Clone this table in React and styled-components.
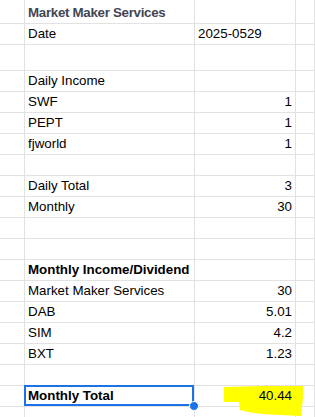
import React from 'react';
import styled, { createGlobalStyle } from 'styled-components';

const GlobalStyle = createGlobalStyle`
  html, body {
    margin: 0;
    padding: 0;
    background: #ffffff;
  }
  body {
    font-family: 'Liberation Sans', Arial, sans-serif;
  }
`;

const GRID = '#e2e2e2';
const BLUE = '#1a73e8';

const rows = [
  { label: 'Market Maker Services', kind: 'title', h: 24 },
  { label: 'Date', value: '2025-0529', valueLeft: true },
  { h: 26 },
  { label: 'Daily Income' },
  { label: 'SWF', value: '1' },
  { label: 'PEPT', value: '1' },
  { label: 'fjworld', value: '1' },
  {},
  { label: 'Daily Total', value: '3' },
  { label: 'Monthly', value: '30' },
  {},
  {},
  { label: 'Monthly Income/Dividend', kind: 'bold' },
  { label: 'Market Maker Services', value: '30' },
  { label: 'DAB', value: '5.01' },
  { label: 'SIM', value: '4.2' },
  { label: 'BXT', value: '1.23' },
  {},
  { label: 'Monthly Total', value: '40.44', kind: 'bold', selected: true },
  {},
];

const Sheet = styled.div`
  position: relative;
  width: 315px;
  height: 417px;
  overflow: hidden;
  background: #fff;
  font-size: 13.33px;
  color: #000;
`;

const Row = styled.div`
  display: grid;
  grid-template-columns: 25px 170px 101px 1fr;
  height: ${(p) => p.$h}px;
`;

const Cell = styled.div`
  position: relative;
  display: flex;
  align-items: flex-end;
  justify-content: ${(p) => (p.$right ? 'flex-end' : 'flex-start')};
  padding: 0 3px 2px 3px;
  line-height: 16px;
  white-space: nowrap;
  border-right: 1px solid ${GRID};
  border-bottom: 1px solid ${GRID};
  font-weight: ${(p) => (p.$bold ? 700 : 400)};
  color: ${(p) => (p.$muted ? '#3f4654' : '#000')};
  letter-spacing: ${(p) => (p.$muted ? '-0.3px' : 'normal')};
  overflow: visible;
  z-index: ${(p) => (p.$selected ? 3 : 'auto')};

  ${(p) =>
    p.$selected &&
    `
    &::after {
      content: '';
      position: absolute;
      top: -1px;
      left: -1px;
      right: 0;
      bottom: 0;
      border: 2px solid ${BLUE};
      pointer-events: none;
    }
  `}
`;

const CellText = styled.span`
  position: relative;
  z-index: 2;
`;

const FillHandle = styled.span`
  position: absolute;
  right: -5px;
  bottom: -5px;
  width: 8px;
  height: 8px;
  border-radius: 50%;
  background: ${BLUE};
  border: 1px solid #fff;
  z-index: 4;
`;

const Highlight = styled.svg`
  position: absolute;
  left: 0;
  top: 0;
  width: 315px;
  height: 417px;
  z-index: 1;
  pointer-events: none;
`;

function SheetRow({ label, value, kind, valueLeft, selected, h = 21 }) {
  return (
    <Row $h={h}>
      <Cell />
      <Cell $bold={kind === 'title' || kind === 'bold'} $muted={kind === 'title'} $selected={selected}>
        {label}
        {selected && <FillHandle />}
      </Cell>
      <Cell $right={!valueLeft}>
        {value && <CellText>{value}</CellText>}
      </Cell>
      <Cell />
    </Row>
  );
}

export default function App() {
  return (
    <>
      <GlobalStyle />
      <Sheet>
        {rows.map((r, i) => (
          <SheetRow key={i} {...r} />
        ))}
        <Highlight viewBox="0 0 315 417">
          <path
            d="M224 387 L262 386 L303 386 L303 398 L302 407 L301 416 L280 415 L262 414 L248 412 L240 410 L239 402 L224 402 Z"
            fill="#ffff00"
          />
        </Highlight>
      </Sheet>
    </>
  );
}
